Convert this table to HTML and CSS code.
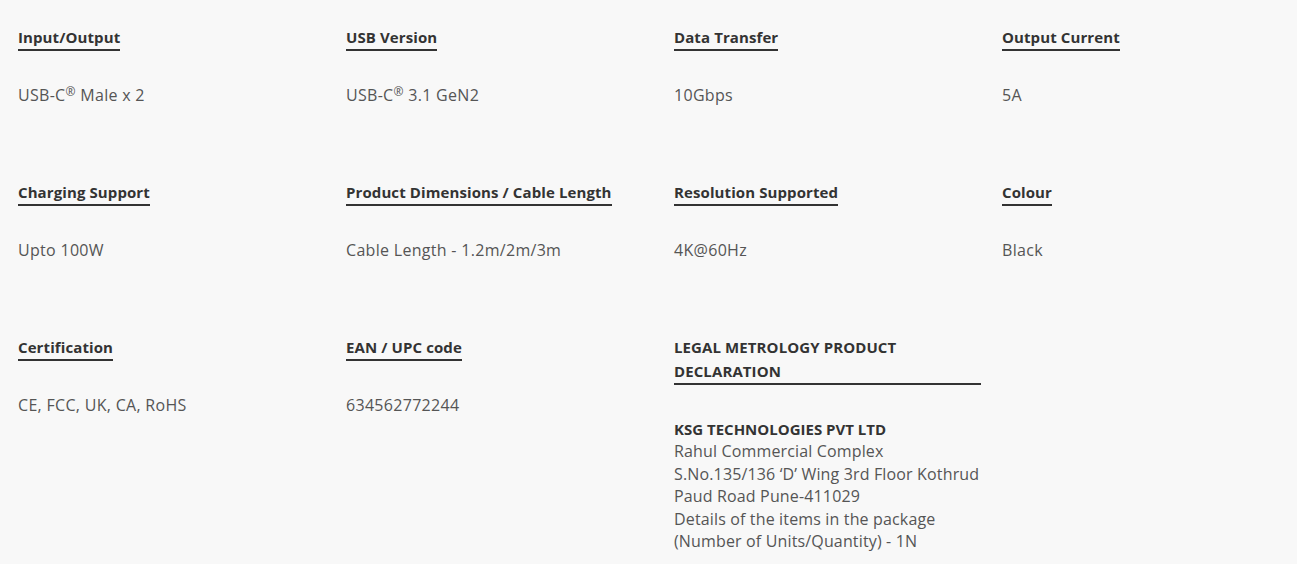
FILE: index.html
```html
<!DOCTYPE html>
<html lang="en">
<head>
<meta charset="utf-8">
<title>Specifications</title>
<link rel="stylesheet" href="styles.css">
</head>
<body>
<div class="specs">
  <div class="spec">
    <h3 class="spec-title">Input/Output</h3>
    <p class="spec-value">USB-C<sup>®</sup> Male x 2</p>
  </div>
  <div class="spec">
    <h3 class="spec-title">USB Version</h3>
    <p class="spec-value">USB-C<sup>®</sup> 3.1 GeN2</p>
  </div>
  <div class="spec">
    <h3 class="spec-title">Data Transfer</h3>
    <p class="spec-value">10Gbps</p>
  </div>
  <div class="spec">
    <h3 class="spec-title">Output Current</h3>
    <p class="spec-value">5A</p>
  </div>
  <div class="spec">
    <h3 class="spec-title">Charging Support</h3>
    <p class="spec-value">Upto 100W</p>
  </div>
  <div class="spec">
    <h3 class="spec-title">Product Dimensions / Cable Length</h3>
    <p class="spec-value">Cable Length - 1.2m/2m/3m</p>
  </div>
  <div class="spec">
    <h3 class="spec-title">Resolution Supported</h3>
    <p class="spec-value">4K@60Hz</p>
  </div>
  <div class="spec">
    <h3 class="spec-title">Colour</h3>
    <p class="spec-value">Black</p>
  </div>
  <div class="spec">
    <h3 class="spec-title">Certification</h3>
    <p class="spec-value">CE, FCC, UK, CA, RoHS</p>
  </div>
  <div class="spec">
    <h3 class="spec-title">EAN / UPC code</h3>
    <p class="spec-value">634562772244</p>
  </div>
  <div class="spec">
    <h3 class="spec-title">LEGAL METROLOGY PRODUCT DECLARATION</h3>
    <p class="spec-value spec-address"><strong>KSG TECHNOLOGIES PVT LTD</strong><br>Rahul Commercial Complex<br>S.No.135/136 ‘D’ Wing 3rd Floor Kothrud<br>Paud Road Pune-411029<br>Details of the items in the package<br>(Number of Units/Quantity) - 1N</p>
  </div>
</div>
</body>
</html>
```

FILE: styles.css
```css
html, body {
  margin: 0;
  padding: 0;
  background: #f8f8f8;
  overflow: hidden;
}

body {
  font-family: "Open Sans", "Liberation Sans", sans-serif;
  color: #555;
}

.specs {
  display: grid;
  grid-template-columns: repeat(4, 307px);
  column-gap: 21px;
  row-gap: 73.6px;
  padding: 25px 0 0 18px;
}

.spec {
  display: flex;
  flex-direction: column;
  align-items: flex-start;
}

.spec-title {
  margin: 0;
  font-size: 15px;
  line-height: 24px;
  font-weight: 700;
  letter-spacing: 0.1px;
  color: #333;
  border-bottom: 2px solid #333;
}

.spec-value {
  margin: 33px 0 0;
  font-size: 16px;
  line-height: 1.4;
  letter-spacing: 0.3px;
  color: #555;
}

.spec-address {
  white-space: nowrap;
  letter-spacing: 0.15px;
}

.spec-value sup {
  font-size: 12px;
  line-height: 0;
  vertical-align: 5px;
}

.spec-value strong {
  color: #333;
  font-weight: 700;
  letter-spacing: 0;
  font-size: 15px;
}
```
